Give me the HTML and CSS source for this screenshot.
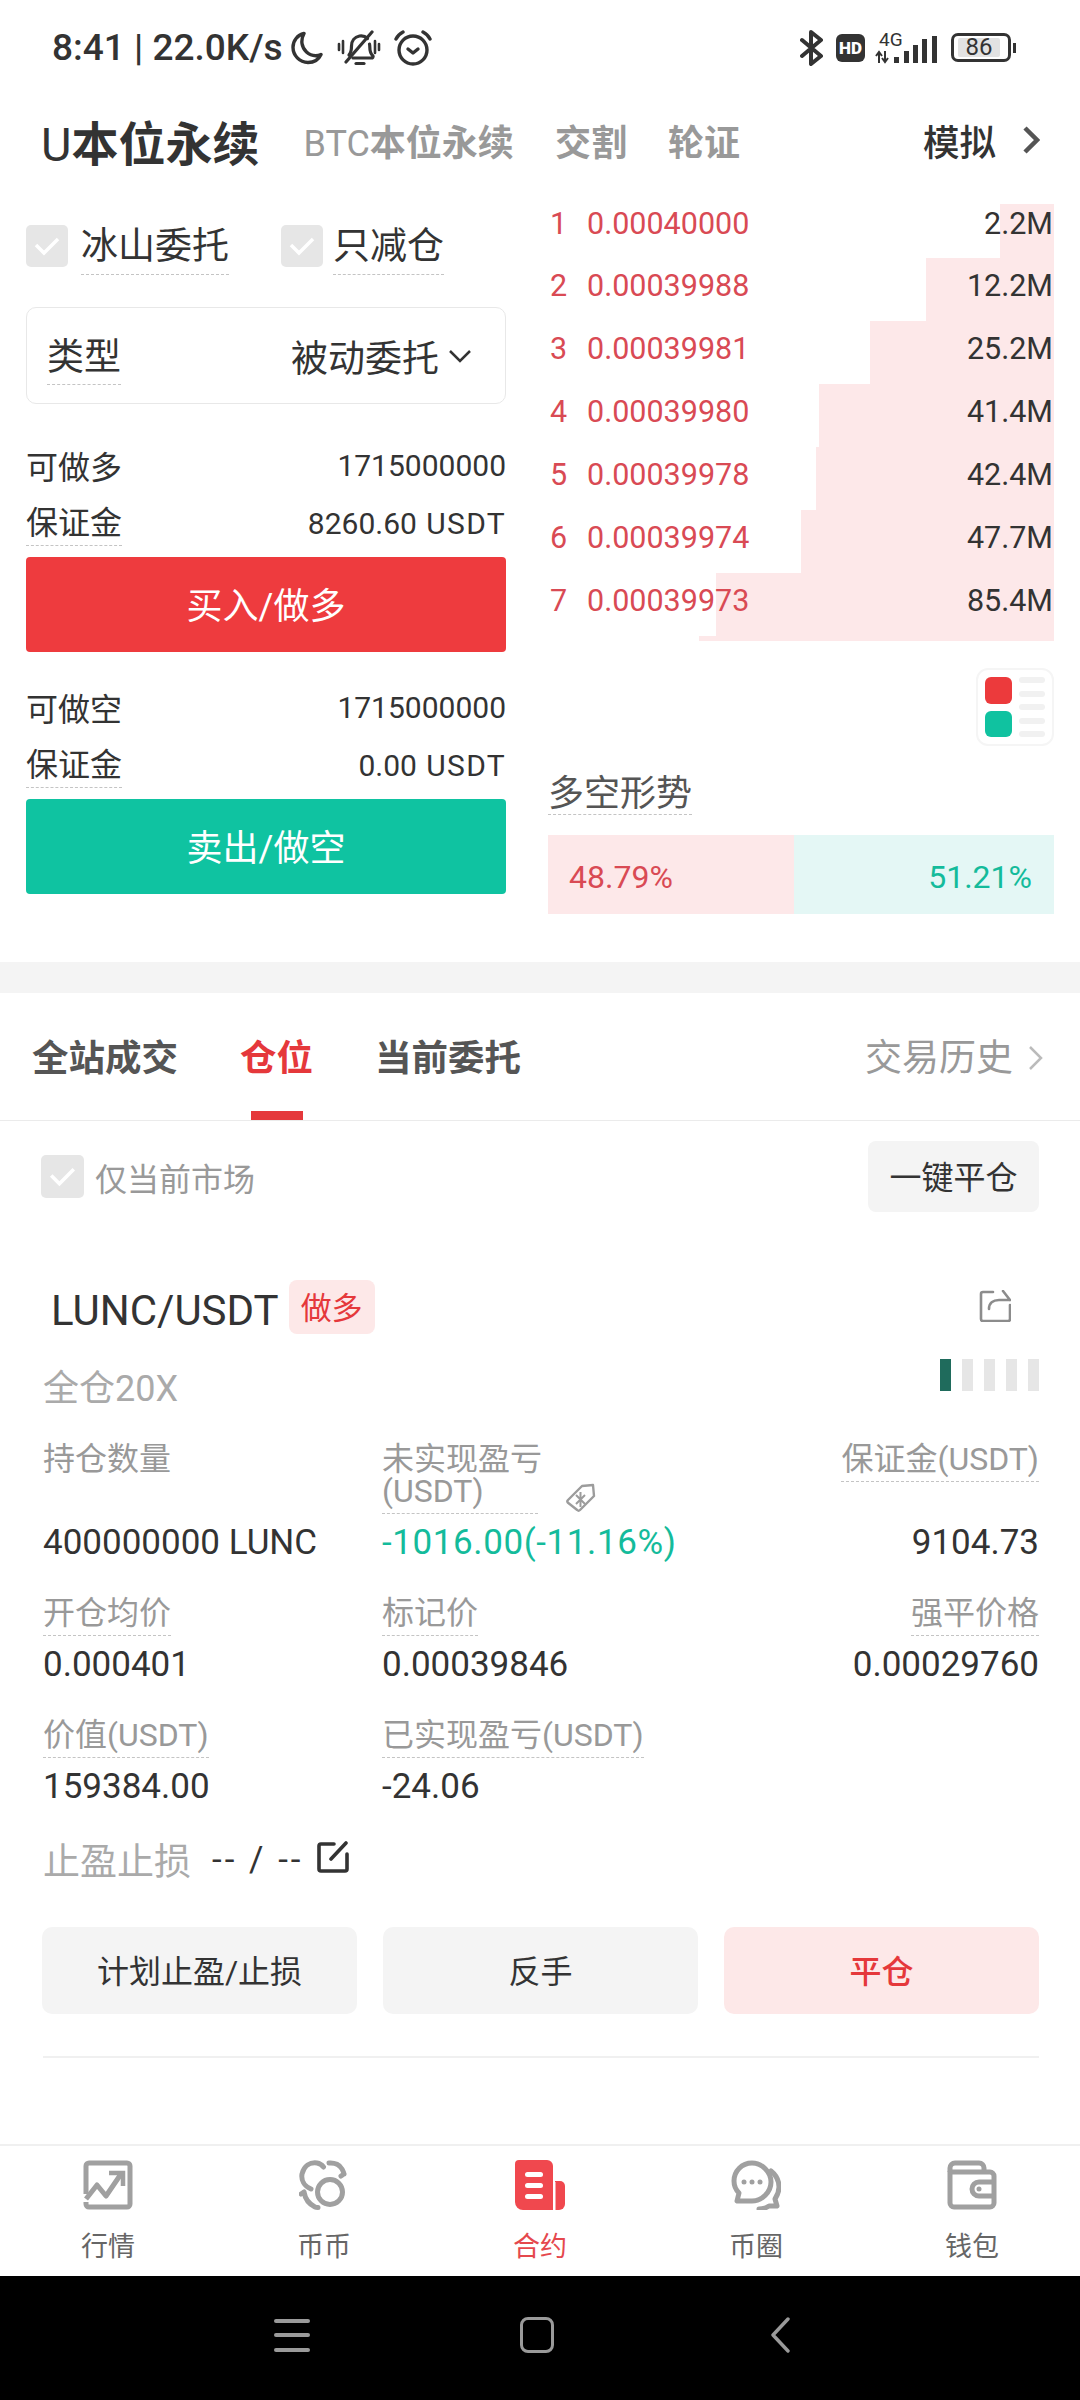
FILE: index.html
```html
<!DOCTYPE html>
<html>
  <head>
    <title>U本位永续</title>
    <link rel="stylesheet" href="styles.css">
  </head>
  <body>
    <div class="status-bar">
      <span class="status-time">8:41 | 22.0K/s</span>
      <svg class="icon-moon" viewBox="0 0 32 34" fill="none" stroke="#333" stroke-width="3.4" stroke-linecap="round" stroke-linejoin="round"><path d="M13 2.5C6.5 4 2 9.6 2 16.3 2 24.3 8.5 31.5 17 31.5c5.8 0 10.800-3.200 13-8-1.600.8-3.500 1.200-5.400 1.200C17.500 24.700 12 19 11 12.500 10.500 8.800 11.400 5.400 13 2.500Z"/></svg>
      <svg class="icon-bell" viewBox="0 0 44 36" fill="none" stroke="#333" stroke-width="3.2" stroke-linecap="round" stroke-linejoin="round"><path d="M12 25c2.500-2.500 2.500-5 2.500-9 0-5 3-9 8-10 3-.5 6 .5 8 2.500M32.500 14c.2 1 .3 2 .3 3 0 4 1 7 3.200 9 .5 1-.5 2-1.500 2H16"/><path d="M9 32 35 2"/><path d="M19 33.500h8"/><path d="M2 14v6M6 11v12M38 11v12M42 14v6" stroke-width="2.600"/></svg>
      <svg class="icon-alarm" viewBox="0 0 38 36" fill="none" stroke="#333" stroke-width="3.400" stroke-linecap="round" stroke-linejoin="round"><circle cx="19" cy="20" r="14"/><path d="M14 19l5 4 5-4"/><path d="M2 9c1.500-3 4-5.500 7-7M36 9c-1.500-3-4-5.500-7-7"/></svg>
      <svg class="icon-bluetooth" viewBox="0 0 24 36" fill="none" stroke="#333" stroke-width="4" stroke-linejoin="round" stroke-linecap="round"><path d="M2 10l19 16-10 8V2l10 8L2 26"/></svg>
      <span class="icon-hd">HD</span>
      <svg class="icon-signal" viewBox="0 0 62 34"><text x="3" y="15" class="signal-text">4G</text><path d="M3 22v10M0 25l3-4 3 4M9 20v10M6 27l3 4 3-4" stroke="#333" stroke-width="2" fill="none"/><rect x="18" y="26" width="5" height="6" fill="#333"/><rect x="28" y="20" width="5" height="12" fill="#333"/><rect x="37" y="14" width="5" height="18" fill="#333"/><rect x="46" y="8" width="5" height="24" fill="#333"/><rect x="56" y="5" width="5" height="27" fill="#333"/></svg>
      <div class="battery">
        <div class="battery-body"><span class="battery-level">86</span></div>
        <div class="battery-cap"></div>
      </div>
    </div>

    <div class="market-tabs">
      <span class="market-main"><span class="latin-main">U</span>本位永续</span>
      <span class="market-tab"><span class="latin">BTC</span>本位永续</span>
      <span class="market-tab">交割</span>
      <span class="market-tab">轮证</span>
      <span class="market-sim">模拟</span>
      <svg class="market-arrow" viewBox="0 0 18 30" fill="none" stroke="#555" stroke-width="4.500"><path d="M3 3l12 12L3 27"/></svg>
    </div>

    <div class="trade">
      <div class="trade-left">
        <div class="checks">
          <span class="check-box"><svg viewBox="0 0 42 42" fill="none" stroke="#fff" stroke-width="3.500"><path d="M10 20l8 8 14-14"/></svg></span>
          <span class="check-label tip">冰山委托</span>
          <span class="check-box check-second"><svg viewBox="0 0 42 42" fill="none" stroke="#fff" stroke-width="3.500"><path d="M10 20l8 8 14-14"/></svg></span>
          <span class="check-label tip">只减仓</span>
        </div>
        <div class="select">
          <span class="tip select-name">类型</span>
          <span class="select-value">被动委托</span>
          <svg class="select-arrow" viewBox="0 0 22 14" fill="none" stroke="#333" stroke-width="2.500"><path d="M1 2l10 10L21 2"/></svg>
        </div>
        <div class="fund-row fund-first"><span>可做多</span><span class="num">1715000000</span></div>
        <div class="fund-row"><span class="tip">保证金</span><span class="num">8260.60 <span class="unit">USDT</span></span></div>
        <div class="order-btn buy">买入/做多</div>
        <div class="fund-row fund-second"><span>可做空</span><span class="num">1715000000</span></div>
        <div class="fund-row"><span class="tip">保证金</span><span class="num">0.00 <span class="unit">USDT</span></span></div>
        <div class="order-btn sell">卖出/做空</div>
      </div>

      <div class="trade-right">
        <div class="book">
          <div class="book-row book-first"><i class="depth" style="width:54px"></i><span class="book-no">1</span><span class="book-price">0.00040000</span><span class="book-vol">2.2M</span></div>
          <div class="book-row"><i class="depth" style="width:128px"></i><span class="book-no">2</span><span class="book-price">0.00039988</span><span class="book-vol">12.2M</span></div>
          <div class="book-row"><i class="depth" style="width:184px"></i><span class="book-no">3</span><span class="book-price">0.00039981</span><span class="book-vol">25.2M</span></div>
          <div class="book-row"><i class="depth" style="width:235px"></i><span class="book-no">4</span><span class="book-price">0.00039980</span><span class="book-vol">41.4M</span></div>
          <div class="book-row"><i class="depth" style="width:238px"></i><span class="book-no">5</span><span class="book-price">0.00039978</span><span class="book-vol">42.4M</span></div>
          <div class="book-row"><i class="depth" style="width:253px"></i><span class="book-no">6</span><span class="book-price">0.00039974</span><span class="book-vol">47.7M</span></div>
          <div class="book-row"><i class="depth" style="width:338px"></i><span class="book-no">7</span><span class="book-price">0.00039973</span><span class="book-vol">85.4M</span></div>
          <div class="book-end"></div>
        </div>
        <div class="book-mode">
          <div class="mode-squares"><span class="mode-red"></span><span class="mode-green"></span></div>
          <div class="mode-lines"><span></span><span></span><span></span><span></span><span></span></div>
        </div>
        <div class="trend-title"><span class="tip">多空形势</span></div>
        <div class="trend">
          <div class="trend-long" style="width:246px">48.79%</div>
          <div class="trend-short">51.21%</div>
        </div>
      </div>
    </div>

    <div class="gap-band"></div>

    <div class="order-tabs">
      <div class="order-tab">全站成交</div>
      <div class="order-tab active">仓位<span class="tab-line"></span></div>
      <div class="order-tab">当前委托</div>
      <div class="order-history">交易历史</div>
      <svg class="history-arrow" viewBox="0 0 16 26" fill="none" stroke="#bbb" stroke-width="2.500"><path d="M2 2l11 11L2 24"/></svg>
    </div>

    <div class="filter">
      <span class="check-box filter-box"><svg viewBox="0 0 42 42" fill="none" stroke="#fff" stroke-width="3.500"><path d="M10 20l8 8 14-14"/></svg></span>
      <span class="filter-label">仅当前市场</span>
      <span class="close-all">一键平仓</span>
    </div>

    <div class="position">
      <div class="pos-head">
        <span class="pos-name">LUNC/USDT</span>
        <span class="pos-side">做多</span>
        <svg class="pos-share" viewBox="0 0 32 32" fill="none" stroke="#8c8c8c" stroke-width="2.600" stroke-linejoin="round" stroke-linecap="round"><path d="M14 2H4a2 2 0 0 0-2 2v25a2 2 0 0 0 2 2h25a2 2 0 0 0 2-2V15"/><path d="M10 19c0-6 4-9 10-9h11M24 1l7 9"/></svg>
      </div>
      <div class="pos-sub">
        <span class="pos-mode">全仓20X</span>
        <div class="risk"><span class="risk-on"></span><span></span><span></span><span></span><span></span></div>
      </div>

      <div class="pos-grid">
        <div class="cell">
          <div class="cell-label">持仓数量</div>
          <div class="cell-value">400000000 LUNC</div>
        </div>
        <div class="cell">
          <div class="pnl-label">
            <span class="cell-label tip pnl-text">未实现盈亏<br>(USDT)</span>
            <svg class="pnl-tag" viewBox="0 0 30 30" fill="none" stroke="#9c9c9c" stroke-width="2.400" stroke-linejoin="round"><path d="M2 17 16 3l11-1 1 11-14 14a2 2 0 0 1-2.800 0L2 19.800a2 2 0 0 1 0-2.800Z"/><path d="M10 12l9 9M19 12l-9 9M14.500 9v15" stroke-width="2"/></svg>
          </div>
          <div class="cell-value green">-1016.00(-11.16%)</div>
        </div>
        <div class="cell cell-right">
          <div class="cell-label tip">保证金(USDT)</div>
          <div class="cell-value">9104.73</div>
        </div>

        <div class="cell">
          <div class="cell-label tip">开仓均价</div>
          <div class="cell-value">0.000401</div>
        </div>
        <div class="cell">
          <div class="cell-label tip">标记价</div>
          <div class="cell-value">0.00039846</div>
        </div>
        <div class="cell cell-right">
          <div class="cell-label tip">强平价格</div>
          <div class="cell-value">0.00029760</div>
        </div>

        <div class="cell">
          <div class="cell-label tip">价值(USDT)</div>
          <div class="cell-value">159384.00</div>
        </div>
        <div class="cell">
          <div class="cell-label tip">已实现盈亏(USDT)</div>
          <div class="cell-value">-24.06</div>
        </div>
      </div>

      <div class="stop-row">
        <span class="stop-name">止盈止损</span>
        <span class="stop-value">-- / --</span>
        <svg class="stop-edit" viewBox="0 0 32 32" fill="none" stroke="#333" stroke-width="3.600" stroke-linejoin="round" stroke-linecap="round"><path d="M17 3H4a2 2 0 0 0-2 2v23a2 2 0 0 0 2 2h24a2 2 0 0 0 2-2V13"/><path d="M14 18 29 2"/></svg>
      </div>

      <div class="pos-actions">
        <div class="pos-btn">计划止盈/止损</div>
        <div class="pos-btn">反手</div>
        <div class="pos-btn pos-close">平仓</div>
      </div>
      <div class="pos-line"></div>
    </div>

    <div class="bottom-nav">
      <div class="nav-item">
        <svg viewBox="0 0 50 50" fill="none" stroke="#a0a0a0" stroke-width="5"><path d="M3 34V6a3 3 0 0 1 3-3h38a3 3 0 0 1 3 3v38a3 3 0 0 1-3 3H6a3 3 0 0 1-3-3v-2"/><path d="M3 39l11-14 9 11 15-22" stroke-linejoin="round"/><path d="M26 13h14v13" stroke-width="4.500"/></svg>
        <span>行情</span>
      </div>
      <div class="nav-item">
        <svg viewBox="0 0 50 50" fill="none" stroke="#a0a0a0" stroke-width="5" stroke-linecap="round"><circle cx="31" cy="32" r="12.500"/><path d="M12 29C5 26 2 20 3 14 5 6 11 2 18 3c3 .5 5 2 6.500 4"/><path d="M30 3c6-.500 11 2 13 6 1 2 2 4 2 5M45 14l-3 2"/><path d="M5 32c1 6 5 12 11 15 1 .5 2 .5 3 .5M5 32l-3 2"/></svg>
        <span>币币</span>
      </div>
      <div class="nav-item nav-active">
        <svg viewBox="0 0 50 50"><path d="M4 0h28a6 6 0 0 1 6 6v44H8a8 8 0 0 1-8-8V4a4 4 0 0 1 4-4Z" fill="#f0484e"/><path d="M40 21h5a5 5 0 0 1 5 5v18a6 6 0 0 1-6 6h-4Z" fill="#f0484e"/><rect x="10" y="12" width="18" height="5" rx="2.500" fill="#fff"/><rect x="10" y="23" width="18" height="5" rx="2.500" fill="#fff"/><rect x="10" y="34" width="18" height="5" rx="2.500" fill="#fff"/><rect x="38" y="22" width="2.500" height="28" fill="#fff"/></svg>
        <span>合约</span>
      </div>
      <div class="nav-item">
        <svg viewBox="0 0 50 50" fill="none" stroke="#a0a0a0" stroke-width="5" stroke-linecap="round" stroke-linejoin="round"><path d="M21 3C11 3 3 11 3 21c0 5 2 9 5 12l-2 8h15c10 0 19-9 19-19S31 3 21 3Z"/><path d="M40 11c5 4 8 10 8 16 0 5-2 9-4 12l2 7h-8c-3 2-6 3-10 3"/><circle cx="13" cy="22" r="2.500" fill="#a0a0a0" stroke="none"/><circle cx="21" cy="22" r="2.500" fill="#a0a0a0" stroke="none"/><circle cx="29" cy="22" r="2.500" fill="#a0a0a0" stroke="none"/></svg>
        <span>币圈</span>
      </div>
      <div class="nav-item">
        <svg viewBox="0 0 50 50" fill="none" stroke="#a0a0a0" stroke-width="5" stroke-linejoin="round"><path d="M3 12V43a4 4 0 0 0 4 4h36a4 4 0 0 0 4-4V16a4 4 0 0 0-4-4H3Z"/><path d="M3 12V8a5 5 0 0 1 5-5h24a5 5 0 0 1 5 5v4"/><path d="M47 22H32a7 7 0 0 0 0 14h15"/><circle cx="32" cy="29" r="2.500" fill="#a0a0a0" stroke="none"/></svg>
        <span>钱包</span>
      </div>
    </div>

    <div class="system-bar">
      <div class="sys-menu"><span></span><span></span><span></span></div>
      <div class="sys-home"></div>
      <svg class="sys-back" viewBox="0 0 20 36" fill="none" stroke="#9a9a9a" stroke-width="3.400" stroke-linecap="round" stroke-linejoin="round"><path d="M18 2 3 18l15 16"/></svg>
    </div>
  </body>
</html>
```

FILE: styles.css
```css
* {
  box-sizing: border-box;
}
html, body {
  margin: 0;
  padding: 0;
}
body {
  width: 1080px;
  height: 2400px;
  display: flex;
  flex-direction: column;
  overflow: hidden;
  font-family: Roboto, "Noto Sans CJK SC", sans-serif;
  color: #333;
  background-color: #fff;
}
.tip {
  border-bottom: 1px dashed #c4c4c4;
}
.num {
  font-size: 30px;
}
.unit {
  margin-left: 2px;
  letter-spacing: 1.3px;
}

/* status bar */
.status-bar {
  height: 95px;
  display: flex;
  align-items: center;
  padding: 0 0 0 52px;
  flex-shrink: 0;
}
.status-time {
  width: 239px;
  font-size: 37px;
  font-weight: 500;
  white-space: nowrap;
}
.icon-moon {
  width: 32px;
  height: 34px;
}
.icon-bell {
  width: 44px;
  height: 36px;
  margin-left: 14px;
}
.icon-alarm {
  width: 38px;
  height: 36px;
  margin-left: 13px;
}
.icon-bluetooth {
  width: 24px;
  height: 36px;
  margin-left: 368px;
}
.icon-hd {
  width: 29px;
  height: 28px;
  margin-left: 12px;
  background-color: #333;
  border-radius: 6px;
  color: #fff;
  font-size: 17px;
  font-weight: 900;
  line-height: 28px;
  text-align: center;
}
.icon-signal {
  width: 62px;
  height: 34px;
  margin-left: 11px;
  overflow: visible;
}
.signal-text {
  font-family: Roboto, sans-serif;
  font-size: 19px;
  fill: #333;
}
.battery {
  display: flex;
  align-items: center;
  margin-left: 13px;
}
.battery-body {
  width: 60px;
  height: 29px;
  border: 3px solid #333;
  border-radius: 7px;
  padding: 2px 8px 2px 4px;
}
.battery-level {
  display: block;
  height: 19px;
  background-color: #e2e2e2;
  border-radius: 2px;
  font-size: 24px;
  line-height: 19px;
  text-align: center;
}
.battery-cap {
  width: 3px;
  height: 10px;
  margin-left: 2px;
  background-color: #333;
}

/* market tabs */
.market-tabs {
  height: 109px;
  padding: 0 40px 19px 41px;
  display: flex;
  align-items: center;
  flex-shrink: 0;
}
.market-main {
  font-size: 47px;
  font-weight: 700;
  margin-right: 44px;
}
.latin-main {
  font-weight: 400;
}
.market-tab {
  font-size: 36px;
  font-weight: 700;
  color: #999;
  margin-right: 41px;
}
.latin {
  font-weight: 400;
}
.market-sim {
  margin-left: auto;
  font-size: 36.500px;
  font-weight: 500;
}
.market-arrow {
  width: 18px;
  height: 30px;
  margin-left: 26px;
}

/* trade area */
.trade {
  height: 758px;
  display: flex;
  flex-shrink: 0;
  padding-left: 26px;
}
.trade-left {
  width: 480px;
  padding-top: 21px;
}
.trade-right {
  width: 506px;
  margin-left: 42px;
}
.checks {
  height: 60px;
  display: flex;
  align-items: flex-start;
  margin-bottom: 22px;
}
.check-box {
  width: 42px;
  height: 42px;
  border-radius: 5px;
  background-color: #e6e6e6;
  flex-shrink: 0;
}
.check-box svg {
  display: block;
  width: 100%;
  height: 100%;
}
.check-second {
  margin-left: 52px;
}
.check-label {
  margin-left: 13px;
  font-size: 37px;
  line-height: 50px;
  height: 53px;
  margin-top: -3px;
}
.check-second + .check-label {
  margin-left: 10px;
}
.select {
  height: 97px;
  border: 1px solid #e8e8e8;
  border-radius: 10px;
  display: flex;
  align-items: center;
  padding: 0 34px 0 20px;
  font-size: 37px;
}
.select-name {
  line-height: 50px;
  height: 52px;
  margin-top: 6px;
}
.select-value {
  margin-left: auto;
}
.select-arrow {
  width: 22px;
  height: 14px;
  margin-left: 10px;
}
.fund-row {
  height: 58px;
  display: flex;
  justify-content: space-between;
  align-items: center;
  font-size: 32px;
}
.fund-row .tip {
  line-height: 44px;
  height: 45px;
}
.fund-first {
  margin-top: 32px;
}
.fund-second {
  margin-top: 26px;
}
.order-btn {
  height: 95px;
  margin-top: 5px;
  border-radius: 4px;
  color: #fff;
  font-size: 36px;
  line-height: 100px;
  text-align: center;
}
.buy {
  background-color: #ee3b3e;
}
.sell {
  background-color: #0fc3a1;
}

/* order book */
.book-row {
  position: relative;
  height: 63px;
  padding: 9px 1px 0 2px;
  display: flex;
  font-size: 30.500px;
  line-height: 38px;
}
.book-first {
  height: 54px;
  padding-top: 1px;
}
.depth {
  position: absolute;
  top: 0;
  right: 0;
  bottom: 0;
  background-color: #fde8e9;
}
.book-no {
  position: relative;
  width: 37px;
  color: #d94a54;
}
.book-price {
  position: relative;
  color: #d94a54;
}
.book-vol {
  position: relative;
  margin-left: auto;
}
.book-end {
  width: 355px;
  height: 5px;
  margin-left: auto;
  background-color: #fde8e9;
}
.book-mode {
  width: 78px;
  height: 78px;
  margin: 27px 0 0 auto;
  border: 2px solid #f5f5f5;
  border-radius: 12px;
  padding: 7px 7px 7px 7px;
  display: flex;
}
.mode-squares {
  display: flex;
  flex-direction: column;
  gap: 7px;
}
.mode-squares span {
  display: block;
  width: 27px;
  height: 27px;
  border-radius: 6px;
}
.mode-red {
  background-color: #ec3a3c;
}
.mode-green {
  background-color: #10c2a0;
}
.mode-lines {
  margin-left: 7px;
  display: flex;
  flex-direction: column;
  justify-content: space-between;
  flex: 1;
}
.mode-lines span {
  display: block;
  height: 6px;
  border-radius: 3px;
  background-color: #f1f1f1;
}
.trend-title {
  margin-top: 26px;
  height: 44px;
  font-size: 36px;
  line-height: 44px;
  color: #555;
}
.trend-title .tip {
  display: inline-block;
  height: 43px;
}
.trend {
  margin-top: 19px;
  height: 79px;
  display: flex;
  font-size: 32px;
  line-height: 84px;
}
.trend-long {
  padding-left: 21px;
  background-color: #fde8e9;
  color: #d94a54;
}
.trend-short {
  flex: 1;
  padding-right: 22px;
  background-color: #e4f7f5;
  color: #14bb9b;
  text-align: right;
}

.gap-band {
  height: 31px;
  flex-shrink: 0;
  background-color: #f4f4f4;
}

/* order tabs */
.order-tabs {
  height: 128px;
  flex-shrink: 0;
  padding: 42px 36px 0 32px;
  display: flex;
  border-bottom: 1px solid #ebebeb;
  font-size: 36.500px;
  line-height: 48px;
}
.order-tab {
  font-weight: 700;
  color: #555;
  margin-right: 62px;
}
.order-tab.active {
  color: #e5383b;
}
.tab-line {
  display: block;
  width: 52px;
  height: 9px;
  margin: 28px auto 0;
  background-color: #e5383b;
}
.order-history {
  margin-left: auto;
  font-size: 37px;
  color: #999;
}
.history-arrow {
  width: 16px;
  height: 26px;
  margin: 10px 0 0 15px;
}

/* filter */
.filter {
  height: 91px;
  flex-shrink: 0;
  padding: 20px 41px 0 41px;
  display: flex;
  align-items: center;
}
.filter-box {
  width: 43px;
  height: 43px;
}
.filter-label {
  margin-left: 11px;
  font-size: 32px;
  color: #999;
}
.close-all {
  margin-left: auto;
  width: 171px;
  height: 71px;
  border-radius: 8px;
  background-color: #f4f4f4;
  font-size: 32px;
  line-height: 75px;
  text-align: center;
}

/* position card */
.position {
  flex: 1;
  padding: 68px 41px 0 43px;
}
.pos-head {
  height: 54px;
  display: flex;
  align-items: center;
}
.pos-name {
  margin: 8px 0 0 8px;
  font-size: 42px;
  line-height: 54px;
}
.pos-side {
  width: 86px;
  height: 54px;
  margin-left: 10px;
  border-radius: 8px;
  background-color: #fde8e8;
  color: #e5383b;
  font-size: 31px;
  line-height: 57px;
  text-align: center;
}
.pos-share {
  width: 32px;
  height: 32px;
  margin: 0 28px 2px auto;
}
.pos-sub {
  margin-top: 25px;
  display: flex;
  justify-content: space-between;
  align-items: flex-start;
}
.pos-mode {
  font-size: 36px;
  line-height: 60px;
  color: #aaa;
}
.risk {
  display: flex;
  gap: 11px;
}
.risk span {
  display: block;
  width: 11px;
  height: 32px;
  background-color: #e6e6e6;
}
.risk .risk-on {
  background-color: #1f6b5c;
}
.pos-grid {
  margin-top: 21px;
  display: grid;
  grid-template-columns: 339px 342px 1fr;
  row-gap: 28px;
}
.cell {
  display: flex;
  flex-direction: column;
  align-items: flex-start;
}
.cell-right {
  align-items: flex-end;
}
.cell-label {
  font-size: 32px;
  line-height: 32px;
  color: #999;
  padding: 3px 0 6px;
}
.cell-value {
  margin-top: auto;
  padding-top: 5px;
  font-size: 35px;
  line-height: 47px;
  white-space: nowrap;
}
.green {
  letter-spacing: .6px;
  color: #14bb9b;
}
.pnl-label {
  display: flex;
  align-items: flex-end;
}
.pnl-text {
  width: 156px;
  white-space: nowrap;
}
.pnl-tag {
  width: 30px;
  height: 30px;
  margin: 0 0 1px 28px;
}
.stop-row {
  margin-top: 25px;
  height: 48px;
  display: flex;
  align-items: center;
}
.stop-name {
  font-size: 37px;
  color: #aaa;
}
.stop-value {
  margin-left: 21px;
  font-size: 35px;
  letter-spacing: 3px;
}
.stop-edit {
  width: 32px;
  height: 32px;
  margin-left: 13px;
  margin-top: -4px;
}
.pos-actions {
  margin-top: 44px;
  margin-left: -1px;
  display: flex;
  gap: 26px;
}
.pos-btn {
  flex: 1;
  height: 87px;
  border-radius: 10px;
  background-color: #f4f4f4;
  font-size: 32px;
  line-height: 91px;
  text-align: center;
}
.pos-close {
  background-color: #fde8e8;
  color: #e5383b;
  font-weight: 500;
}
.pos-line {
  height: 2px;
  margin-top: 42px;
  background-color: #f0f0f0;
}

/* bottom nav */
.bottom-nav {
  height: 132px;
  flex-shrink: 0;
  display: flex;
  border-top: 2px solid #f0f0f0;
}
.nav-item {
  width: 216px;
  display: flex;
  flex-direction: column;
  align-items: center;
  padding-top: 14px;
  font-size: 27px;
  color: #666;
}
.nav-item svg {
  width: 50px;
  height: 50px;
}
.nav-item span {
  margin-top: 19px;
  line-height: 36px;
}
.nav-active {
  color: #e5484d;
}

/* android buttons */
.system-bar {
  height: 124px;
  flex-shrink: 0;
  background-color: #000;
  position: relative;
  display: flex;
  align-items: center;
  padding: 0 0 6px 274px;
}
.sys-menu {
  width: 36px;
  height: 33px;
  display: flex;
  flex-direction: column;
  justify-content: space-between;
}
.sys-menu span {
  display: block;
  height: 4px;
  background-color: #9a9a9a;
  border-radius: 2px;
}
.sys-home {
  width: 34px;
  height: 36px;
  margin-left: 210px;
  border: 3px solid #9a9a9a;
  border-radius: 8px;
}
.sys-back {
  width: 20px;
  height: 36px;
  margin-left: 216px;
}
```
